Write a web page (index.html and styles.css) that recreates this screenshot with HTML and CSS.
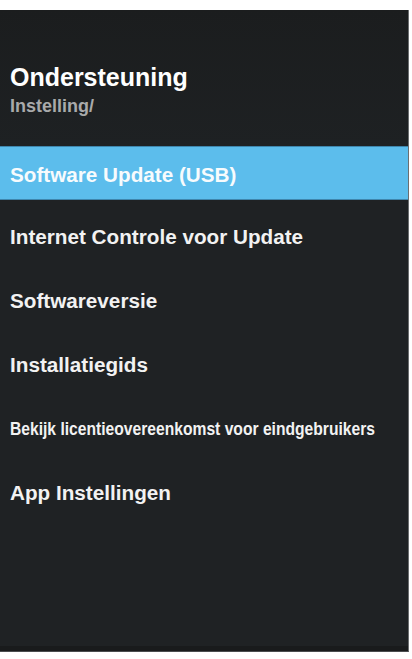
FILE: index.html
```html
<!DOCTYPE html>
<html lang="nl">
<head>
<meta charset="utf-8">
<title>Ondersteuning</title>
<link rel="stylesheet" href="styles.css">
</head>
<body>
<div class="panel">
  <header class="header">
    <h1 class="title">Ondersteuning</h1>
    <div class="crumb">Instelling/</div>
  </header>
  <ul class="menu">
    <li class="item active"><span>Software Update (USB)</span></li>
    <li class="item"><span>Internet Controle voor Update</span></li>
    <li class="item"><span>Softwareversie</span></li>
    <li class="item"><span>Installatiegids</span></li>
    <li class="item small"><span>Bekijk licentieovereenkomst voor eindgebruikers</span></li>
    <li class="item"><span>App Instellingen</span></li>
  </ul>
</div>
</body>
</html>
```
FILE: styles.css
```css
html, body {
  margin: 0;
  padding: 0;
  background: #ffffff;
}
body {
  font-family: "Liberation Sans", Arial, sans-serif;
  font-weight: bold;
}
.panel {
  margin-top: 10px;
  width: 409px;
  height: 642px;
  background: #1f2224;
  border-right: 1px solid #6b6e70;
  border-bottom: 1px solid #4a4d4f;
  box-sizing: border-box;
  box-shadow: inset 0 -5px 0 #191b1c;
  overflow: hidden;
}
.header {
  padding: 53px 0 0 10px;
  background: linear-gradient(#1b1d1e, #1e2123);
  height: 83px;
}
.title {
  margin: 0;
  font-size: 25px;
  line-height: 28px;
  color: #ffffff;
  font-weight: bold;
}
.crumb {
  margin-top: 5px;
  font-size: 18px;
  line-height: 20px;
  color: #a9aaab;
}
.menu {
  list-style: none;
  margin: 0;
  padding: 0;
  display: flex;
  flex-direction: column;
  gap: 10px;
}
.item {
  height: 54px;
  display: flex;
  align-items: center;
  padding-left: 10px;
  font-size: 20.7px;
  color: #f2f2f2;
  box-sizing: border-box;
}
.item.active {
  background: #5cbdec;
  border-top: 1px solid #3f86ad;
  border-bottom: 1px solid #3f86ad;
  padding-top: 3px;
  color: #f7fbfd;
}
.item.small span {
  display: inline-block;
  font-size: 19px;
  transform: scaleX(0.823);
  transform-origin: left center;
  white-space: nowrap;
}
```
